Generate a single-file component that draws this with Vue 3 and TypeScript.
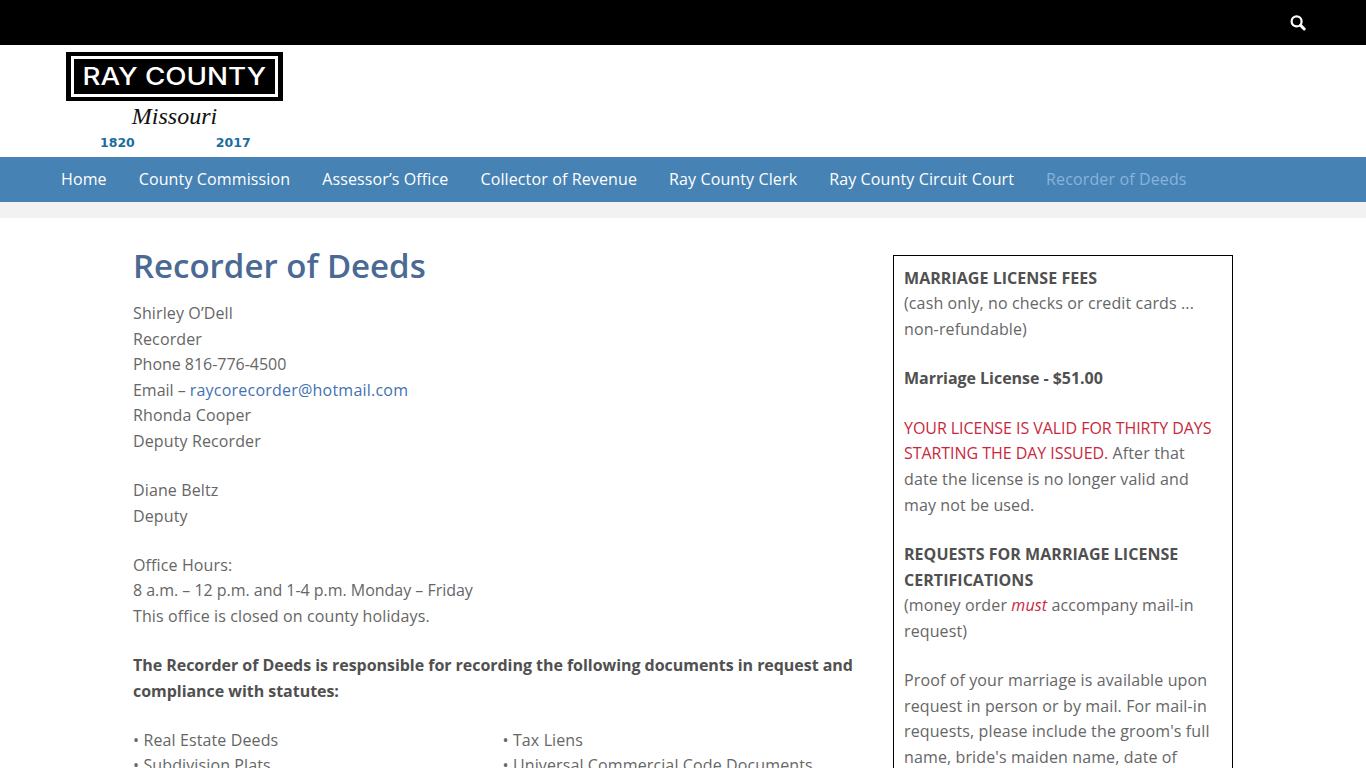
<script setup lang="ts">
const navItems: string[] = ['Home', 'County Commission', 'Assessor’s Office', 'Collector of Revenue', 'Ray County Clerk', 'Ray County Circuit Court']
</script>

<template>
  <div class="page">
    <div class="topbar">
      <svg class="search" viewBox="0 0 16 16" width="16" height="16" aria-hidden="true">
        <circle cx="6.6" cy="6.4" r="5" fill="none" stroke="#fff" stroke-width="2.2" />
        <path d="M10.6 10.4 14.2 14" stroke="#fff" stroke-width="3" stroke-linecap="round" />
      </svg>
    </div>
    <header class="brand">
      <div class="logo">
        <div class="logo-box"><div class="logo-inner"><span class="logo-text">RAY COUNTY</span></div></div>
        <div class="logo-state">Missouri</div>
        <div class="logo-years"><span>1820</span><span>2017</span></div>
      </div>
    </header>
    <nav class="nav">
      <a v-for="item in navItems" :key="item">{{ item }}</a>
      <a class="current">Recorder of Deeds</a>
    </nav>
    <div class="strip"></div>
    <div class="content">
      <main class="main">
        <h1>Recorder of Deeds</h1>
        <p>Shirley O’Dell<br>Recorder<br><span class="num">Phone 816-776-4500</span><br><span class="num">Email – </span><a class="link">raycorecorder@hotmail.com</a><br>Rhonda Cooper<br>Deputy Recorder</p>
        <p>Diane Beltz<br>Deputy</p>
        <p>Office Hours:<br><span class="num">8 a.m. – 12 p.m. and 1-4 p.m. Monday – Friday</span><br>This office is closed on county holidays.</p>
        <p><strong class="tight">The Recorder of Deeds is responsible for recording the following documents in request and compliance with statutes:</strong></p>
        <div class="docs">
          <div>• Real Estate Deeds<br>• Subdivision Plats</div>
          <div>• Tax Liens<br>• Universal Commercial Code Documents</div>
        </div>
      </main>
      <aside class="side">
        <p><strong>MARRIAGE LICENSE FEES</strong><br>(cash only, no checks or credit cards ... non-refundable)</p>
        <p><strong class="tight">Marriage License - $51.00</strong></p>
        <p><span class="red caps">YOUR LICENSE IS VALID FOR THIRTY DAYS STARTING THE DAY ISSUED.</span> After that date the license is no longer valid and may not be used.</p>
        <p><strong>REQUESTS FOR MARRIAGE LICENSE CERTIFICATIONS</strong><br>(money order <em class="red">must</em> accompany mail-in request)</p>
        <p>Proof of your marriage is available upon request in person or by mail. For mail-in requests, please include the groom's full name, bride's maiden name, date of marriage.</p>
      </aside>
    </div>
  </div>
</template>

<style>
html, body { margin: 0; overflow: hidden; background: #fff; }
</style>

<style scoped>
.page {
  height: 768px;
  overflow: hidden;
  font-family: "Open Sans", sans-serif;
  font-size: 16px;
  line-height: 25.6px;
  color: #666;
  letter-spacing: 0.12px;
}
.topbar {
  height: 45px;
  background: #000;
  display: flex;
  justify-content: flex-end;
  align-items: center;
  padding-right: 60px;
}
.search { display: block; }
.brand { height: 112px; padding: 7px 0 0 66px; box-sizing: border-box; }
.logo { width: 217px; }
.logo-box { background: #000; height: 49px; padding: 4px 5px; box-sizing: border-box; }
.logo-inner {
  height: 41px;
  border: 3px solid #fff;
  box-sizing: border-box;
  color: #fff;
  font-family: Inter, sans-serif;
  font-weight: 500;
  font-size: 24px;
  letter-spacing: 0;
  line-height: 35px;
  text-align: center;
  white-space: nowrap;
}
.logo-text { display: inline-block; transform: scaleX(1.157); }
.logo-state {
  font-family: "Liberation Serif", serif;
  font-style: italic;
  font-size: 24px;
  letter-spacing: 0;
  line-height: 26px;
  color: #111;
  text-align: center;
  margin-top: 2px;
}
.logo-years {
  display: flex;
  gap: 81px;
  padding-left: 34px;
  margin-top: 5px;
  font-family: "DejaVu Sans", sans-serif;
  font-weight: 700;
  font-size: 12.5px;
  letter-spacing: 0;
  line-height: 18px;
  color: #1a6e9e;
}
.nav {
  height: 45px;
  background: #4682b4;
  display: flex;
  gap: 32px;
  padding-left: 61px;
  align-items: center;
  line-height: 45px;
  color: #fff;
  letter-spacing: 0.125px;
  white-space: nowrap;
}
.nav .current { color: #87b3dc; }
.strip { height: 16px; background: #f2f2f2; }
.content {
  display: flex;
  align-items: flex-start;
  padding: 37px 0 0 133px;
}
.main { width: 724px; }
h1 {
  margin: -12px 0 12px;
  font-size: 33px;
  font-weight: 600;
  letter-spacing: 0;
  line-height: 46px;
  color: #4a6a94;
}
p { margin: 0 0 23.5px; }
strong { font-weight: 700; color: #505050; letter-spacing: 0.04px; }
.tight { letter-spacing: -0.04px; }
.num { letter-spacing: -0.03px; }
.link { color: #4272b4; letter-spacing: 0.22px; }
.red { color: #c8283c; }
.caps { letter-spacing: -0.055px; }
.docs { display: grid; grid-template-columns: 369.5px 1fr; }
.side {
  width: 340px;
  margin-left: 36px;
  box-sizing: border-box;
  border: 1px solid #000;
  padding: 9.85px 10px;
}
.side p { margin-bottom: 23.8px; }
</style>
